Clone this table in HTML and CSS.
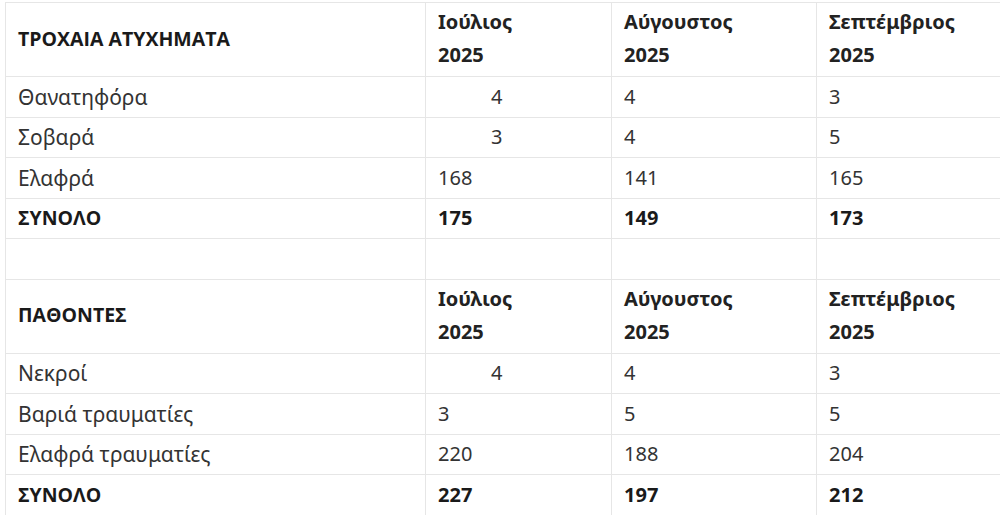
FILE: index.html
```html
<!DOCTYPE html>
<html lang="el">
<head>
<meta charset="utf-8">
<title>Τροχαία ατυχήματα</title>
<link rel="stylesheet" href="styles.css">
</head>
<body>
<div class="wrap">
<table class="stats">
  <colgroup>
    <col class="c1"><col class="c2"><col class="c3"><col class="c4">
  </colgroup>
  <tbody>
    <tr class="head">
      <td class="label">ΤΡΟΧΑΙΑ ΑΤΥΧΗΜΑΤΑ</td>
      <td class="month">Ιούλιος<br>2025</td>
      <td class="month">Αύγουστος<br>2025</td>
      <td class="month">Σεπτέμβριος<br>2025</td>
    </tr>
    <tr class="row">
      <td class="name">Θανατηφόρα</td>
      <td><span class="indent">4</span></td>
      <td>4</td>
      <td>3</td>
    </tr>
    <tr class="row">
      <td class="name">Σοβαρά</td>
      <td><span class="indent">3</span></td>
      <td>4</td>
      <td>5</td>
    </tr>
    <tr class="row">
      <td class="name">Ελαφρά</td>
      <td>168</td>
      <td>141</td>
      <td>165</td>
    </tr>
    <tr class="row total">
      <td class="label">ΣΥΝΟΛΟ</td>
      <td>175</td>
      <td>149</td>
      <td>173</td>
    </tr>
    <tr class="row">
      <td></td><td></td><td></td><td></td>
    </tr>
    <tr class="head">
      <td class="label">ΠΑΘΟΝΤΕΣ</td>
      <td class="month">Ιούλιος<br>2025</td>
      <td class="month">Αύγουστος<br>2025</td>
      <td class="month">Σεπτέμβριος<br>2025</td>
    </tr>
    <tr class="row">
      <td class="name">Νεκροί</td>
      <td><span class="indent">4</span></td>
      <td>4</td>
      <td>3</td>
    </tr>
    <tr class="row">
      <td class="name">Βαριά τραυματίες</td>
      <td>3</td>
      <td>5</td>
      <td>5</td>
    </tr>
    <tr class="row">
      <td class="name">Ελαφρά τραυματίες</td>
      <td>220</td>
      <td>188</td>
      <td>204</td>
    </tr>
    <tr class="row total">
      <td class="label">ΣΥΝΟΛΟ</td>
      <td>227</td>
      <td>197</td>
      <td>212</td>
    </tr>
  </tbody>
</table>
</div>
</body>
</html>
```

FILE: styles.css
```css
html, body {
  margin: 0;
  padding: 0;
  background: #ffffff;
  overflow: hidden;
}

.wrap {
  padding: 2px 0 0 5px;
}

.stats {
  border-collapse: collapse;
  table-layout: fixed;
  width: 995px;
  font-family: "Noto Sans", "Open Sans", sans-serif;
  font-size: 20px;
  color: #333333;
}

.c1 { width: 420px; }
.c2 { width: 186px; }
.c3 { width: 205px; }
.c4 { width: 184px; }

.stats td {
  border: 1px solid #e6e6e6;
  padding: 0 12px;
  vertical-align: middle;
  text-align: left;
  white-space: nowrap;
}

.stats tr td:last-child {
  border-right: none;
}

.row td {
  height: 39.5px;
  line-height: 26px;
}

.head td {
  height: 70px;
  padding-bottom: 3px;
  line-height: 33px;
}

.name {
  font-size: 21px;
}

.label {
  font-family: "Open Sans", sans-serif;
  font-weight: 700;
  font-size: 19.5px;
  color: #1a1a1a;
}

.month {
  font-weight: 700;
  color: #222222;
}

.total td {
  font-weight: 700;
  color: #1a1a1a;
}

.indent {
  padding-left: 53px;
}
```
